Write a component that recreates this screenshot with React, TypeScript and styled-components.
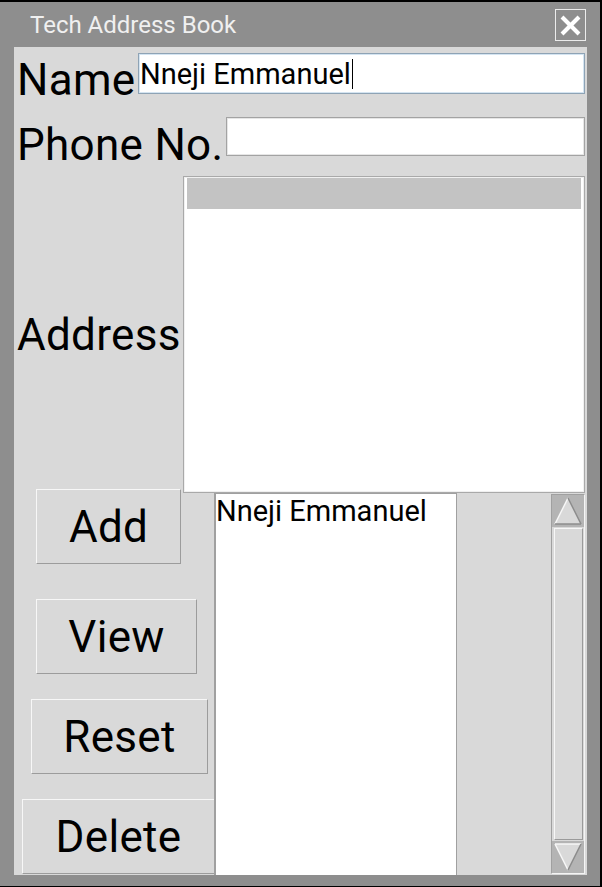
import styled, { createGlobalStyle } from "styled-components";

const GlobalStyle = createGlobalStyle`
  html, body {
    margin: 0;
    padding: 0;
    background: #000;
  }
  body {
    padding-top: 2px;
    font-family: Roboto, "Liberation Sans", sans-serif;
  }
`;

const Window = styled.div`
  width: 600px;
  height: 884px;
  box-sizing: border-box;
  background: #8e8e8e;
  padding: 0 13px 11px 14px;
  display: flex;
  flex-direction: column;
`;

const TitleBar = styled.div`
  height: 45px;
  display: flex;
  align-items: center;
  justify-content: space-between;
  padding: 0 1px 0 16px;
`;

const TitleText = styled.span`
  color: #f0f0f0;
  font-size: 24px;
  line-height: 28px;
`;

const CloseButton = styled.button`
  width: 31px;
  height: 32px;
  padding: 0;
  box-sizing: border-box;
  border: 1px solid #ececec;
  background: transparent;
  display: flex;
  align-items: center;
  justify-content: center;
`;

const Content = styled.div`
  height: 828px;
  box-sizing: border-box;
  background: #d9d9d9;
  padding-top: 6px;
  display: flex;
  flex-direction: column;
`;

const FieldRow = styled.div<{ $top: number; $center?: boolean }>`
  display: flex;
  align-items: ${(p) => (p.$center ? "center" : "flex-start")};
  margin-top: ${(p) => p.$top}px;
  padding-right: 2px;
`;

const Label = styled.label<{ $offset?: number }>`
  font-size: 44px;
  letter-spacing: 0.3px;
  line-height: 50px;
  color: #000;
  padding-left: 3px;
  margin-top: ${(p) => p.$offset ?? 0}px;
  white-space: nowrap;
`;

const Entry = styled.div<{ $width: number; $height: number; $focused?: boolean }>`
  margin-left: auto;
  width: ${(p) => p.$width}px;
  height: ${(p) => p.$height}px;
  box-sizing: border-box;
  background: #fff;
  border: 1px solid ${(p) => (p.$focused ? "#8ea3b5" : "#a3a3a3")};
  box-shadow: inset 0 0 0 1px ${(p) => (p.$focused ? "#d4e4f1" : "#e6e6e6")};
  padding: 0 1px;
  display: flex;
  align-items: center;
  font-size: 29px;
  color: #000;
`;

const Caret = styled.span`
  display: inline-block;
  width: 1.5px;
  height: 30px;
  background: #000;
  margin-left: 1px;
`;

const TextBox = styled.div`
  margin-left: auto;
  width: 402px;
  height: 317px;
  box-sizing: border-box;
  background: #fff;
  border: 1px solid #a9a9a9;
  box-shadow: inset 0 0 0 1px #f0f0f0;
  padding: 1px 3px 0;
`;

const TextBoxBar = styled.div`
  height: 31px;
  background: #c3c3c3;
`;

const BottomSection = styled.div`
  height: 382px;
  display: grid;
  grid-template-columns: 200px 243px 1fr 34px;
  padding-right: 2px;
`;

const ButtonColumn = styled.div`
  display: flex;
  flex-direction: column;
  align-items: flex-start;
`;

const ActionButton = styled.button<{ $left: number; $width: number; $top: number }>`
  margin-left: ${(p) => p.$left}px;
  margin-top: ${(p) => p.$top}px;
  width: ${(p) => p.$width}px;
  height: 75px;
  box-sizing: border-box;
  padding: 0;
  background: #d9d9d9;
  border: 1px solid;
  border-color: #f7f7f7 #9c9c9c #9c9c9c #f7f7f7;
  font-family: Roboto, "Liberation Sans", sans-serif;
  font-size: 44px;
  letter-spacing: 0.3px;
  line-height: 50px;
  color: #000;
  text-align: center;
`;

const ListBox = styled.div`
  background: #fff;
  border: 1px solid #a0a0a0;
  border-left-width: 2px;
  border-bottom: none;
  padding: 1px 0;
  overflow: hidden;
`;

const ListItem = styled.div`
  font-size: 29px;
  line-height: 33px;
  color: #000;
  white-space: nowrap;
`;

const Spacer = styled.div``;

const ScrollBar = styled.div`
  margin: 1px 0;
  box-sizing: border-box;
  border: 1px solid;
  border-color: #a0a0a0 #f4f4f4 #f4f4f4 #a0a0a0;
  background: #d9d9d9;
  display: flex;
  flex-direction: column;
`;

const ArrowButton = styled.div`
  height: 32px;
  background: #b4b4b4;
  display: flex;
`;

const Slider = styled.div`
  flex: 1;
  margin: 1px 1px 1px 2px;
  border: 1px solid;
  border-color: #f7f7f7 #9a9a9a #9a9a9a #f7f7f7;
`;

const UpArrow = () => (
  <svg width="32" height="32" viewBox="0 0 32 32">
    <polygon points="16,3 29,29 3,29" fill="#d9d9d9" />
    <line x1="3" y1="29" x2="16" y2="3" stroke="#f7f7f7" strokeWidth="1.5" />
    <line x1="16" y1="3" x2="29" y2="29" stroke="#8c8c8c" strokeWidth="1.5" />
    <line x1="29" y1="29" x2="3" y2="29" stroke="#8c8c8c" strokeWidth="1.5" />
  </svg>
);

const DownArrow = () => (
  <svg width="32" height="32" viewBox="0 0 32 32">
    <polygon points="3,3 29,3 16,29" fill="#d9d9d9" />
    <line x1="3" y1="3" x2="29" y2="3" stroke="#f7f7f7" strokeWidth="1.5" />
    <line x1="3" y1="3" x2="16" y2="29" stroke="#f7f7f7" strokeWidth="1.5" />
    <line x1="29" y1="3" x2="16" y2="29" stroke="#8c8c8c" strokeWidth="1.5" />
  </svg>
);

const contacts = ["Nneji Emmanuel"];

const App = () => {
  return (
    <>
      <GlobalStyle />
      <Window>
        <TitleBar>
          <TitleText>Tech Address Book</TitleText>
          <CloseButton aria-label="Close">
            <svg width="29" height="30" viewBox="0 0 29 30">
              <line x1="6" y1="7" x2="23" y2="24" stroke="#fff" strokeWidth="4" />
              <line x1="23" y1="7" x2="6" y2="24" stroke="#fff" strokeWidth="4" />
            </svg>
          </CloseButton>
        </TitleBar>
        <Content>
          <FieldRow $top={0}>
            <Label $offset={2}>Name</Label>
            <Entry $width={447} $height={41} $focused>
              Nneji Emmanuel
              <Caret />
            </Entry>
          </FieldRow>
          <FieldRow $top={12}>
            <Label $offset={3}>Phone No.</Label>
            <Entry $width={359} $height={39} />
          </FieldRow>
          <FieldRow $top={6} $center>
            <Label>Address</Label>
            <TextBox>
              <TextBoxBar />
            </TextBox>
          </FieldRow>
          <BottomSection>
            <ButtonColumn>
              <ActionButton $left={22} $width={145} $top={-4}>
                Add
              </ActionButton>
              <ActionButton $left={22} $width={161} $top={35}>
                View
              </ActionButton>
              <ActionButton $left={17} $width={177} $top={25}>
                Reset
              </ActionButton>
              <ActionButton $left={8} $width={193} $top={25}>
                Delete
              </ActionButton>
            </ButtonColumn>
            <ListBox>
              {contacts.map((c) => (
                <ListItem key={c}>{c}</ListItem>
              ))}
            </ListBox>
            <Spacer />
            <ScrollBar>
              <ArrowButton>
                <UpArrow />
              </ArrowButton>
              <Slider />
              <ArrowButton>
                <DownArrow />
              </ArrowButton>
            </ScrollBar>
          </BottomSection>
        </Content>
      </Window>
    </>
  );
};

export default App;
